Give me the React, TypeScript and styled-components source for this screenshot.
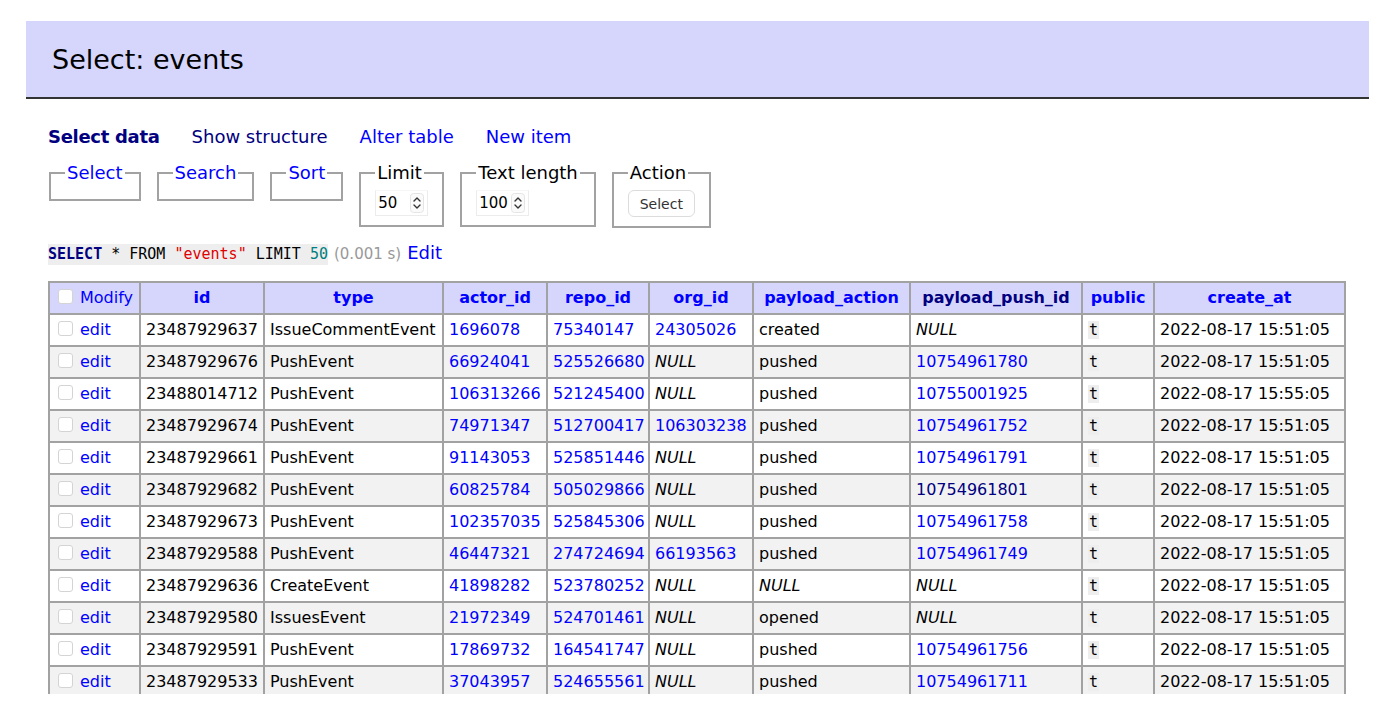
import React from "react";
import styled, { createGlobalStyle } from "styled-components";

const Global = createGlobalStyle`
  html, body { margin: 0; padding: 0; background: #fff; }
  body { font-family: "DejaVu Sans", Verdana, sans-serif; color: #000; }
`;

const Page = styled.div`
  padding: 21px 15px 0 26px;
`;

const Heading = styled.h2`
  margin: 0;
  height: 76px;
  display: flex;
  align-items: center;
  padding-left: 26px;
  background: #d6d6fd;
  border-bottom: 2px solid #333;
  font-size: 27px;
  font-weight: normal;
`;

const Content = styled.div`
  padding-left: 22px;
`;

const Links = styled.nav`
  display: flex;
  gap: 32px;
  margin-top: 27px;
  font-size: 18px;
  line-height: 22px;
`;

const NavLink = styled.a<{ $visited?: boolean; $bold?: boolean }>`
  color: ${(p) => (p.$visited ? "#000080" : "#0000ff")};
  font-weight: ${(p) => (p.$bold ? "bold" : "normal")};
  letter-spacing: ${(p) => (p.$bold ? "-0.3px" : "0")};
  text-decoration: none;
`;

const Fieldsets = styled.div`
  display: flex;
  align-items: flex-start;
  gap: 16px;
  margin-top: 15px;
  padding-left: 1px;
`;

const Fieldset = styled.fieldset`
  margin: 0;
  padding: 8px 14px 9px;
  border: 2px solid #a2a2a2;
  min-inline-size: 0;
`;

const Legend = styled.legend<{ $link?: boolean }>`
  padding: 0 2px;
  font-size: 18px;
  line-height: 19px;
  color: ${(p) => (p.$link ? "#0000ff" : "#000")};
`;

const NumberBox = styled.div<{ $w: number }>`
  display: flex;
  align-items: center;
  justify-content: space-between;
  width: ${(p) => p.$w}px;
  height: 26px;
  box-sizing: border-box;
  padding: 0 3px 0 2px;
  border: 1px solid #ececec;
  border-top-color: #f6f6f6;
  font-size: 15px;
  background: #fff;
`;

const Spinner = styled.svg`
  display: block;
`;

const ActionButton = styled.button`
  display: block;
  width: 67px;
  height: 27px;
  box-sizing: border-box;
  border: 1px solid #dcdcdc;
  border-radius: 6px;
  background: #fff;
  color: #333;
  font-family: "DejaVu Sans", Verdana, sans-serif;
  font-size: 14px;
  padding: 0;
  margin: 0;
`;

const SqlLine = styled.p`
  margin: 14px 0 0;
  display: flex;
  align-items: baseline;
  gap: 6px;
  line-height: 21px;
`;

const Code = styled.code`
  font-family: "DejaVu Sans Mono", Menlo, monospace;
  font-size: 15px;
  background: #eee;
  padding: 0;
`;

const Kw = styled.span<{ $c: string; $b?: boolean }>`
  color: ${(p) => p.$c};
  font-weight: ${(p) => (p.$b ? "bold" : "normal")};
`;

const Time = styled.span`
  color: #999;
  font-size: 15px;
`;

const EditLink = styled.a`
  color: #0000ff;
  font-size: 18px;
  text-decoration: none;
`;

const TableWrap = styled.div`
  margin-top: 16px;
  height: 413px;
  overflow: hidden;
`;

const Table = styled.table`
  border-collapse: collapse;
  table-layout: fixed;
  width: 1296px;
  font-size: 16px;
`;

const Th = styled.th<{ $visited?: boolean; $left?: boolean }>`
  background: #d6d6fd;
  border: 2px solid #a2a2a2;
  padding: 5px 5px;
  line-height: 20px;
  text-align: ${(p) => (p.$left ? "left" : "center")};
  font-weight: ${(p) => (p.$left ? "normal" : "bold")};
  color: ${(p) => (p.$visited ? "#000080" : "#0000ff")};
  white-space: nowrap;
`;

const Tr = styled.tr<{ $odd: boolean }>`
  background: ${(p) => (p.$odd ? "#f2f2f2" : "#fff")};
`;

const Td = styled.td`
  border: 2px solid #a2a2a2;
  padding: 5px 5px;
  line-height: 20px;
  white-space: nowrap;
  overflow: hidden;
`;

const CellLink = styled.a<{ $visited?: boolean }>`
  color: ${(p) => (p.$visited ? "#000080" : "#0000ff")};
  text-decoration: none;
`;

const Null = styled.i`
  font-style: italic;
`;

const Bool = styled.code`
  font-family: "DejaVu Sans Mono", Menlo, monospace;
  font-size: 15px;
  background: #eee;
  padding: 0 1px;
`;

const Check = styled.span`
  display: inline-block;
  width: 13px;
  height: 13px;
  border: 1px solid #d4d4d4;
  border-radius: 3px;
  background: #fff;
  vertical-align: -1px;
  margin: 0 7px 0 3px;
`;

const Stepper = () => (
  <Spinner width="14" height="20" viewBox="0 0 14 20">
    <rect x="0.5" y="0.5" width="13" height="19" rx="3" fill="#fafafa" stroke="#e4e4e4" />
    <path d="M4 8 L7 5 L10 8" fill="none" stroke="#333" strokeWidth="1.4" strokeLinecap="round" strokeLinejoin="round" />
    <path d="M4 12 L7 15 L10 12" fill="none" stroke="#333" strokeWidth="1.4" strokeLinecap="round" strokeLinejoin="round" />
  </Spinner>
);

type Row = {
  id: string;
  type: string;
  actor: string;
  repo: string;
  org: string | null;
  action: string | null;
  push: string | null;
  pushVisited?: boolean;
  at: string;
};

const T = "2022-08-17 15:51:05";
const rows: Row[] = [
  { id: "23487929637", type: "IssueCommentEvent", actor: "1696078", repo: "75340147", org: "24305026", action: "created", push: null, at: T },
  { id: "23487929676", type: "PushEvent", actor: "66924041", repo: "525526680", org: null, action: "pushed", push: "10754961780", at: T },
  { id: "23488014712", type: "PushEvent", actor: "106313266", repo: "521245400", org: null, action: "pushed", push: "10755001925", at: "2022-08-17 15:55:05" },
  { id: "23487929674", type: "PushEvent", actor: "74971347", repo: "512700417", org: "106303238", action: "pushed", push: "10754961752", at: T },
  { id: "23487929661", type: "PushEvent", actor: "91143053", repo: "525851446", org: null, action: "pushed", push: "10754961791", at: T },
  { id: "23487929682", type: "PushEvent", actor: "60825784", repo: "505029866", org: null, action: "pushed", push: "10754961801", pushVisited: true, at: T },
  { id: "23487929673", type: "PushEvent", actor: "102357035", repo: "525845306", org: null, action: "pushed", push: "10754961758", at: T },
  { id: "23487929588", type: "PushEvent", actor: "46447321", repo: "274724694", org: "66193563", action: "pushed", push: "10754961749", at: T },
  { id: "23487929636", type: "CreateEvent", actor: "41898282", repo: "523780252", org: null, action: null, push: null, at: T },
  { id: "23487929580", type: "IssuesEvent", actor: "21972349", repo: "524701461", org: null, action: "opened", push: null, at: T },
  { id: "23487929591", type: "PushEvent", actor: "17869732", repo: "164541747", org: null, action: "pushed", push: "10754961756", at: T },
  { id: "23487929533", type: "PushEvent", actor: "37043957", repo: "524655561", org: null, action: "pushed", push: "10754961711", at: T },
];

const cols = [91, 124, 179, 104, 102, 104, 157, 172, 72, 191];
const heads: { label: string; visited?: boolean }[] = [
  { label: "id" },
  { label: "type" },
  { label: "actor_id" },
  { label: "repo_id" },
  { label: "org_id" },
  { label: "payload_action" },
  { label: "payload_push_id", visited: true },
  { label: "public" },
  { label: "create_at" },
];

const maybeLink = (v: string | null, visited?: boolean) =>
  v === null ? <Null>NULL</Null> : <CellLink href="#" $visited={visited}>{v}</CellLink>;

export default function App() {
  return (
    <Page>
      <Global />
      <Heading>Select: events</Heading>
      <Content>
        <Links>
          <NavLink $visited $bold>Select data</NavLink>
          <NavLink href="#" $visited>Show structure</NavLink>
          <NavLink href="#">Alter table</NavLink>
          <NavLink href="#">New item</NavLink>
        </Links>
        <Fieldsets>
          <Fieldset><Legend $link>Select</Legend></Fieldset>
          <Fieldset><Legend $link>Search</Legend></Fieldset>
          <Fieldset><Legend $link>Sort</Legend></Fieldset>
          <Fieldset>
            <Legend>Limit</Legend>
            <NumberBox $w={53}>50<Stepper /></NumberBox>
          </Fieldset>
          <Fieldset>
            <Legend>Text length</Legend>
            <NumberBox $w={53}>100<Stepper /></NumberBox>
          </Fieldset>
          <Fieldset>
            <Legend>Action</Legend>
            <ActionButton>Select</ActionButton>
          </Fieldset>
        </Fieldsets>
        <SqlLine>
          <Code>
            <Kw $c="#000080" $b>SELECT</Kw> * FROM <Kw $c="#e00000">"events"</Kw> LIMIT <Kw $c="#008080">50</Kw>
          </Code>
          <Time>(0.001 s)</Time>
          <EditLink href="#">Edit</EditLink>
        </SqlLine>
        <TableWrap>
          <Table>
            <colgroup>
              {cols.map((w, i) => (
                <col key={i} style={{ width: w }} />
              ))}
            </colgroup>
            <thead>
              <tr>
                <Th $left>
                  <Check />Modify
                </Th>
                {heads.map((h) => (
                  <Th key={h.label} $visited={h.visited}>{h.label}</Th>
                ))}
              </tr>
            </thead>
            <tbody>
              {rows.map((r, i) => (
                <Tr key={r.id} $odd={i % 2 === 1}>
                  <Td>
                    <Check />
                    <CellLink href="#">edit</CellLink>
                  </Td>
                  <Td>{r.id}</Td>
                  <Td>{r.type}</Td>
                  <Td>{maybeLink(r.actor)}</Td>
                  <Td>{maybeLink(r.repo)}</Td>
                  <Td>{maybeLink(r.org)}</Td>
                  <Td>{r.action === null ? <Null>NULL</Null> : r.action}</Td>
                  <Td>{maybeLink(r.push, r.pushVisited)}</Td>
                  <Td><Bool>t</Bool></Td>
                  <Td>{r.at}</Td>
                </Tr>
              ))}
            </tbody>
          </Table>
        </TableWrap>
      </Content>
    </Page>
  );
}
